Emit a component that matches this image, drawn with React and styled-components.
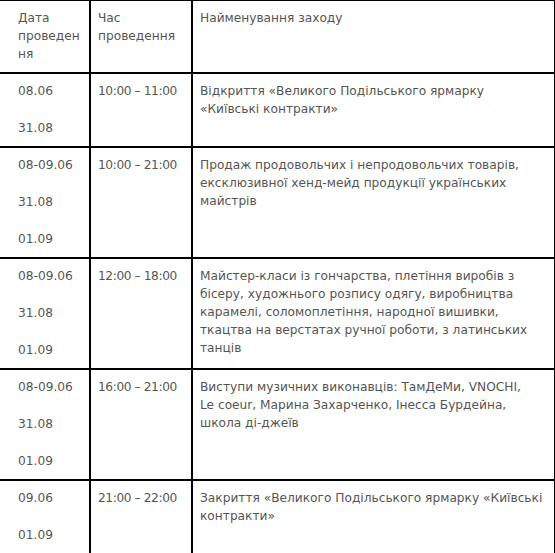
import styled, { createGlobalStyle } from 'styled-components';

const GlobalStyle = createGlobalStyle`
  html, body {
    margin: 0;
    padding: 0;
    background: #fff;
    overflow: hidden;
  }
`;

const Page = styled.div`
  width: 555px;
  height: 553px;
  overflow: hidden;
`;

const Table = styled.table`
  width: 556px;
  margin: -1px 0 0 -2px;
  border-collapse: collapse;
  table-layout: fixed;
  font-family: "DejaVu Sans", sans-serif;
  font-size: 12.2px;
  line-height: 18px;
  color: #555;
`;

const Row = styled.tr`
  &:last-child td {
    padding-bottom: 14px;
  }
`;

const Cell = styled.td`
  border: 2px solid #000;
  vertical-align: top;
  padding: 8px 10px 9px 7px;
  overflow-wrap: anywhere;

  &:first-child {
    padding-left: 18px;
    padding-right: 3px;
  }
`;

const NoWrap = styled.span`
  white-space: nowrap;
`;

const Time = styled.span`
  letter-spacing: -0.4px;
`;

const DateLine = styled.p`
  margin: 0 0 19px;

  &:last-child {
    margin-bottom: 0;
  }
`;

const rows = [
    {
        dates: ['08.06', '31.08'],
        time: '10:00 – 11:00',
        title: 'Відкриття «Великого Подільського ярмарку «Київські контракти»',
    },
    {
        dates: ['08-09.06', '31.08', '01.09'],
        time: '10:00 – 21:00',
        title: 'Продаж продовольчих і непродовольчих товарів, ексклюзивної хенд-мейд продукції українських майстрів',
    },
    {
        dates: ['08-09.06', '31.08', '01.09'],
        time: '12:00 – 18:00',
        title: 'Майстер-класи із гончарства, плетіння виробів з бісеру, художнього розпису одягу, виробництва карамелі, соломоплетіння, народної вишивки, ткацтва на верстатах ручної роботи, з латинських танців',
    },
    {
        dates: ['08-09.06', '31.08', '01.09'],
        time: '16:00 – 21:00',
        title: (
            <>
                Виступи музичних виконавців: ТамДеМи, VNOCHI, <NoWrap>Le coeur</NoWrap>, Марина Захарченко, Інесса Бурдейна, школа ді-джеїв
            </>
        ),
    },
    {
        dates: ['09.06', '01.09'],
        time: '21:00 – 22:00',
        title: 'Закриття «Великого Подільського ярмарку «Київські контракти»',
    },
];

const App = () => {
    return (
        <Page>
            <GlobalStyle />
            <Table>
                <colgroup>
                    <col style={{width: 91}} />
                    <col style={{width: 102}} />
                    <col style={{width: 363}} />
                </colgroup>
                <tbody>
                    <Row>
                        <Cell>Дата проведення</Cell>
                        <Cell>Час проведення</Cell>
                        <Cell>Найменування заходу</Cell>
                    </Row>
                    {rows.map((row, i) => (
                        <Row key={i}>
                            <Cell>
                                {row.dates.map(d => (
                                    <DateLine key={d}>{d}</DateLine>
                                ))}
                            </Cell>
                            <Cell><Time>{row.time}</Time></Cell>
                            <Cell>{row.title}</Cell>
                        </Row>
                    ))}
                </tbody>
            </Table>
        </Page>
    );
};

export default App;
